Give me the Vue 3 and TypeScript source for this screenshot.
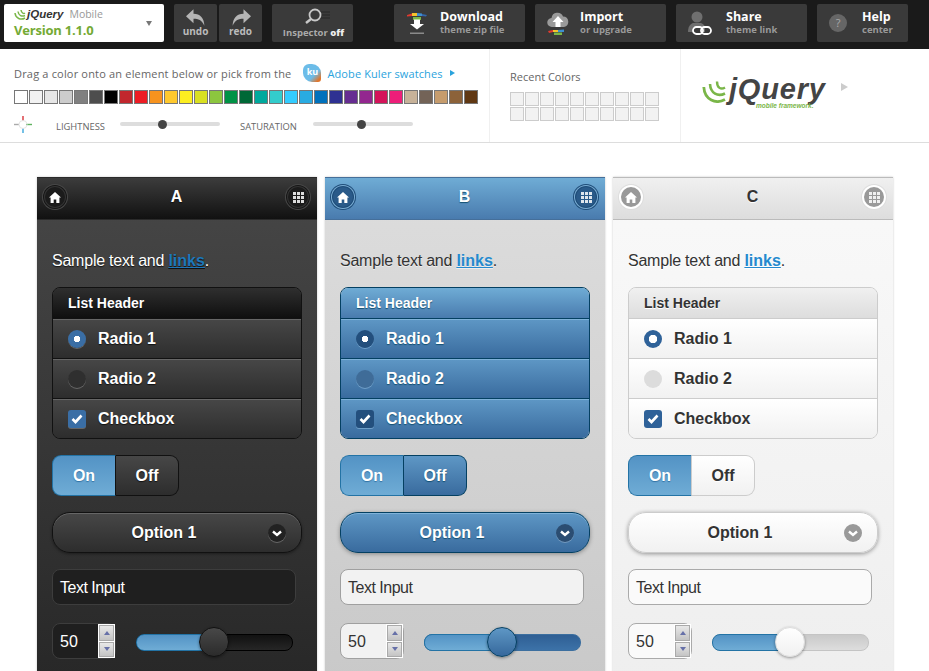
<script setup lang="ts">
interface Tool {
  id: string
  title: string
  sub: string
}
const tools: Tool[] = [
  { id: 'download', title: 'Download', sub: 'theme zip file' },
  { id: 'import', title: 'Import', sub: 'or upgrade' },
  { id: 'share', title: 'Share', sub: 'theme link' },
  { id: 'help', title: 'Help', sub: 'center' },
]
const swatches: string[] = [
  '#ffffff', '#f2f2f2', '#e6e6e6', '#cccccc', '#808080', '#4d4d4d', '#000000', '#c1272d',
  '#ed1c24', '#f7931e', '#ffc92e', '#fcee21', '#d9e021', '#8cc63f', '#009245', '#006837',
  '#00a99d', '#33cccc', '#33ccff', '#29abe2', '#0071bc', '#2e3192', '#662d91', '#93278f',
  '#d4145a', '#ed1e79', '#c7b299', '#736357', '#c69c6d', '#8c6239', '#603813',
]
const recent: number[] = Array.from({ length: 20 }, (_, i) => i)
const panels: { key: string; title: string }[] = [
  { key: 'a', title: 'A' },
  { key: 'b', title: 'B' },
  { key: 'c', title: 'C' },
]
const grid: number[] = [0, 1, 2, 3, 4, 5, 6, 7, 8]
</script>

<template>
  <div class="page">
    <header class="topbar">
      <div class="version">
        <div class="version-text">
          <div class="version-brand">
            <svg class="swirl-small" viewBox="0 0 24 22" width="12" height="11">
              <path d="M22 18C14 23 3 19 2 8M22 13C16 16 9 13 8 5M22 8C19 10 15 8 14 2" fill="none" stroke="#7ab648" stroke-width="3" />
            </svg>
            <span class="brand-jq">jQuery</span>
            <span class="brand-mobile">Mobile</span>
          </div>
          <div class="version-number">Version 1.1.0</div>
        </div>
        <span class="caret"></span>
      </div>

      <div class="history">
        <button class="tool-mini">
          <svg viewBox="0 0 24 20" width="20" height="17"><path d="M9 0L0 8.500 9 17v-5.500c6 0 10 1.500 13 8.500 0-9-5-14.500-13-14.500z" fill="#b5b5b5" /></svg>
          <span>undo</span>
        </button>
        <button class="tool-mini">
          <svg viewBox="0 0 24 20" width="20" height="17"><path transform="matrix(-1 0 0 1 24 0)" d="M9 0L0 8.500 9 17v-5.500c6 0 10 1.500 13 8.500 0-9-5-14.500-13-14.500z" fill="#b5b5b5" /></svg>
          <span>redo</span>
        </button>
      </div>

      <button class="inspector">
        <svg viewBox="0 0 34 16" width="34" height="16">
          <path d="M20 4h11M20 7h11M20 10h11" stroke="#303030" stroke-width="2" />
          <circle cx="16" cy="7" r="5.500" fill="none" stroke="#c8c8c8" stroke-width="1.800" />
          <path d="M12 11L7 15" stroke="#c8c8c8" stroke-width="2.400" />
        </svg>
        <span>Inspector <b>off</b></span>
      </button>

      <div class="tools">
        <button v-for="tool in tools" :key="tool.id" class="tool" :class="'tool-' + tool.id">
          <span class="tool-icon">
            <svg v-if="tool.id === 'download'" viewBox="0 0 22 22" width="22" height="22">
              <path d="M1 3l5-1.500V4L1 4.500z" fill="#e03a2f" /><path d="M6 1h5v3H6z" fill="#f5c22c" /><path d="M11 1l5 .500V4h-5z" fill="#3e8ed0" /><path d="M16 2l5 1-1 1.500-4-.500z" fill="#36a" />
              <path d="M7 5h8v3H7z" fill="#7ab648" />
              <path d="M8 10h6v5h4l-7 6-7-6h4z" fill="#fff" transform="translate(0 -1.500) scale(1 .900)" />
              <path d="M4 20.500h14v1.500H4z" fill="#8a8a8a" />
            </svg>
            <svg v-else-if="tool.id === 'import'" viewBox="0 0 22 24" width="22" height="24">
              <path d="M5 16a4.500 4.500 0 0 1-.500-9A6 6 0 0 1 16 5.500 5.300 5.300 0 0 1 17 16z" fill="#9a9a9a" />
              <path d="M11 5l5.500 6H13.500v5h-5v-5H5.500z" fill="#fff" />
              <path d="M1 20l5-1v2l-4 1z" fill="#e03a2f" /><path d="M6 19h5v2H6z" fill="#f5c22c" /><path d="M11 19l6-.500V21h-6z" fill="#3e8ed0" /><path d="M7 21.500h8V24H7z" fill="#7ab648" />
            </svg>
            <svg v-else-if="tool.id === 'share'" viewBox="0 0 26 24" width="26" height="24">
              <circle cx="9" cy="6" r="5.500" fill="#6f6f6f" />
              <path d="M0 21c0-5 2-8 5-9h8c3 1 4 3 4 6v3z" fill="#6f6f6f" />
              <rect x="5" y="16" width="10" height="7" rx="3.500" fill="#3a3a3a" stroke="#fff" stroke-width="1.800" />
              <rect x="13" y="16" width="10" height="7" rx="3.500" fill="none" stroke="#fff" stroke-width="1.800" />
            </svg>
            <span v-else class="help-dot">?</span>
          </span>
          <span class="tool-text">
            <span class="tool-title">{{ tool.title }}</span>
            <span class="tool-sub">{{ tool.sub }}</span>
          </span>
        </button>
      </div>
    </header>

    <section class="palette">
      <div class="colors">
        <div class="colors-line">
          <span class="drag-text">Drag a color onto an element below or pick from the</span>
          <span class="kuler-icon">ku</span>
          <a class="kuler-link">Adobe Kuler swatches</a>
          <span class="kuler-arrow"></span>
        </div>
        <div class="swatches">
          <span v-for="color in swatches" :key="color" class="swatch" :style="{ background: color }"></span>
        </div>
        <div class="adjust">
          <svg class="target" viewBox="0 0 18 17" width="18" height="17">
            <path d="M9 0v5" stroke="#d8343a" stroke-width="1.400" /><path d="M9 12v5" stroke="#3aa6dc" stroke-width="1.400" />
            <path d="M0 8.500h5" stroke="#aaa" stroke-width="1.400" /><path d="M12 8.500h6" stroke="#5fb25f" stroke-width="1.400" />
            <circle cx="9" cy="8.500" r="4" fill="none" stroke="#e4e4e4" />
          </svg>
          <span class="adjust-label lightness">LIGHTNESS</span>
          <span class="mini-track"><i class="mini-thumb" style="left: 38px"></i></span>
          <span class="adjust-label saturation">SATURATION</span>
          <span class="mini-track"><i class="mini-thumb" style="left: 44px"></i></span>
        </div>
      </div>
      <div class="recent">
        <div class="recent-title">Recent Colors</div>
        <div class="recent-grid">
          <span v-for="n in recent" :key="n" class="recent-cell"></span>
        </div>
      </div>
      <div class="logo-area">
        <svg class="swirl" viewBox="0 0 24 23" width="24" height="23">
          <path d="M23 19.500C14 24.500 2.500 20 1.800 7" fill="none" stroke="#7ab648" stroke-width="2.800" />
          <path d="M23 13.500C16 17 8.500 13.500 8 4" fill="none" stroke="#7ab648" stroke-width="2.600" />
          <path d="M23 7.500C19 10 15 8 15 1.500" fill="none" stroke="#7ab648" stroke-width="2.400" />
        </svg>
        <div class="logo-words">
          <div class="logo-jq">jQuery</div>
          <div class="logo-sub">mobile framework.</div>
        </div>
        <span class="logo-arrow"></span>
      </div>
    </section>

    <main class="panels">
      <article v-for="panel in panels" :key="panel.key" class="panel" :class="'theme-' + panel.key">
        <div class="panel-head">
          <span class="round-btn">
            <svg viewBox="0 0 12 11" width="12" height="11"><path d="M6 0l6 5.500h-1.600V11H7.300V7.500H4.700V11H1.600V5.500H0z" fill="currentColor" /></svg>
          </span>
          <h2>{{ panel.title }}</h2>
          <span class="round-btn">
            <span class="dots"><i v-for="d in grid" :key="d"></i></span>
          </span>
        </div>
        <div class="panel-body">
          <p class="sample">Sample text and <a>links</a>.</p>
          <div class="list">
            <div class="list-head">List Header</div>
            <div class="row">
              <span class="radio on"></span>
              <span>Radio 1</span>
            </div>
            <div class="row">
              <span class="radio"></span>
              <span>Radio 2</span>
            </div>
            <div class="row">
              <span class="check">
                <svg viewBox="0 0 12 10" width="12" height="10"><path d="M1.500 5l3 3 6-6.500" fill="none" stroke="#fff" stroke-width="2.600" /></svg>
              </span>
              <span>Checkbox</span>
            </div>
          </div>
          <div class="toggle">
            <span class="seg seg-on">On</span>
            <span class="seg seg-off">Off</span>
          </div>
          <div class="select">
            <span class="select-text">Option 1</span>
            <span class="chev">
              <svg viewBox="0 0 10 7" width="10" height="7"><path d="M1 1.500l4 3.500 4-3.500" fill="none" stroke="#fff" stroke-width="2.400" /></svg>
            </span>
          </div>
          <div class="text-input">Text Input</div>
          <div class="slider-row">
            <div class="number">
              <span>50</span>
              <span class="stepper">
                <i class="step step-up"></i>
                <i class="step step-down"></i>
              </span>
            </div>
            <div class="slider">
              <span class="slider-fill"></span>
              <span class="slider-thumb"></span>
            </div>
          </div>
        </div>
      </article>
    </main>
  </div>
</template>

<style scoped>
.page {
  width: 929px;
  height: 671px;
  overflow: hidden;
  background: #fff;
  font-family: "Liberation Sans", Arial, sans-serif;
}
button {
  border: 0;
  padding: 0;
  margin: 0;
  font: inherit;
}

/* Top bar */
.topbar {
  display: flex;
  height: 49px;
  box-sizing: border-box;
  padding: 4px 0 7px 4px;
  background: #1a1a1a;
  font-family: "Open Sans", sans-serif;
}
.version {
  width: 160px;
  display: flex;
  align-items: center;
  justify-content: space-between;
  box-sizing: border-box;
  padding: 0 10px;
  background: #fff;
  border-radius: 2px;
}
.version-brand {
  display: flex;
  align-items: center;
  height: 13px;
  font-size: 10.5px;
  line-height: 13px;
}
.swirl-small {
  margin-right: 1px;
}
.brand-jq {
  font: italic bold 11.5px "Liberation Sans", sans-serif;
  color: #333;
  margin-right: 6px;
}
.brand-mobile {
  color: #999;
}
.version-number {
  font-size: 13px;
  font-weight: 700;
  letter-spacing: -.2px;
  line-height: 18px;
  color: #74aa35;
}
.caret {
  width: 0;
  height: 0;
  margin-right: 2px;
  border: 3.5px solid transparent;
  border-top: 5px solid #777;
  border-bottom: 0;
}
.history {
  display: flex;
  gap: 2px;
  margin-left: 10px;
}
.tool-mini {
  width: 43px;
  height: 38px;
  display: flex;
  flex-direction: column;
  align-items: center;
  padding-top: 5px;
  box-sizing: border-box;
  background: #3a3a3a;
  border-radius: 2px;
  color: #bbb;
  font-size: 10px;
  font-weight: 700;
  line-height: 11px;
}
.inspector {
  width: 81px;
  height: 38px;
  margin-left: 10px;
  display: flex;
  flex-direction: column;
  align-items: center;
  padding-top: 4px;
  box-sizing: border-box;
  background: #3a3a3a;
  border-radius: 2px;
  color: #aaa;
  font-size: 9.5px;
  font-weight: 700;
  line-height: 13px;
}
.inspector svg {
  margin-bottom: 2px;
  margin-left: 6px;
}
.inspector span {
  margin-left: 2px;
}
.inspector b {
  color: #eee;
}
.tools {
  display: flex;
  gap: 10px;
  margin-left: 41px;
}
.tool {
  width: 131px;
  height: 38px;
  display: flex;
  align-items: center;
  box-sizing: border-box;
  padding-left: 12px;
  background: #3a3a3a;
  border-radius: 2px;
  text-align: left;
}
.tool-help {
  width: 91px;
}
.tool-icon {
  width: 34px;
  height: 30px;
  display: flex;
  align-items: center;
  flex: none;
}
.tool-import .tool-icon,
.tool-help .tool-icon {
  width: 33px;
}
.tool-share .tool-icon {
  width: 38px;
}
.help-dot {
  width: 18px;
  height: 18px;
  border-radius: 50%;
  background: #666;
  color: #aaa;
  font-size: 11px;
  line-height: 18px;
  text-align: center;
}
.tool-text {
  display: flex;
  flex-direction: column;
  padding-bottom: 2px;
}
.tool-title {
  color: #fff;
  font-size: 12.5px;
  font-weight: 700;
  line-height: 15px;
}
.tool-sub {
  color: #999;
  font-size: 9.5px;
  font-weight: 700;
  line-height: 12px;
}

/* Palette */
.palette {
  display: flex;
  height: 94px;
  box-sizing: border-box;
  border-bottom: 1px solid #ddd;
  font-family: "Open Sans", sans-serif;
  color: #666;
}
.colors {
  width: 490px;
  box-sizing: border-box;
  padding: 13px 0 0 14px;
  border-right: 1px solid #f0f0f0;
}
.colors-line {
  display: flex;
  align-items: center;
  height: 22px;
  font-size: 11px;
}
.drag-text {
  letter-spacing: .18px;
}
.kuler-icon {
  width: 18px;
  height: 18px;
  margin-left: 12px;
  border-radius: 6px 9px 3px 9px;
  background: linear-gradient(135deg, #6cbce8 62%, #e0762c 88%);
  color: #fff;
  font-size: 9px;
  font-weight: 700;
  line-height: 16px;
  text-align: center;
}
.kuler-link {
  margin-left: 6px;
  letter-spacing: .1px;
  color: #2aa3dd;
}
.kuler-arrow {
  margin-left: 7px;
  border-left: 5px solid #2aa3dd;
  border-top: 3px solid transparent;
  border-bottom: 3px solid transparent;
}
.swatches {
  display: flex;
  gap: 1px;
  margin-top: 6px;
}
.swatch {
  width: 14px;
  height: 14px;
  box-sizing: border-box;
  border: 1px solid #777;
}
.adjust {
  display: flex;
  align-items: center;
  margin-top: 10px;
  height: 20px;
}
.target {
  flex: none;
}
.adjust-label {
  margin-top: 4px;
  font-size: 9.4px;
}
.lightness {
  margin-left: 24px;
  width: 64px;
}
.saturation {
  margin-left: 20px;
  width: 73px;
}
.mini-track {
  position: relative;
  width: 100px;
  height: 4px;
  border-radius: 2px;
  background: #ddd;
}
.mini-thumb {
  position: absolute;
  top: -2.5px;
  width: 9px;
  height: 9px;
  border-radius: 50%;
  background: #444;
}
.recent {
  width: 191px;
  box-sizing: border-box;
  padding: 19px 0 0 20px;
  border-right: 1px solid #f0f0f0;
}
.recent-title {
  font-size: 11px;
  line-height: 18px;
}
.recent-grid {
  display: grid;
  grid-template-columns: repeat(10, 14px);
  gap: 1px;
  margin-top: 6px;
}
.recent-cell {
  width: 14px;
  height: 14px;
  box-sizing: border-box;
  border: 1px solid #ccc;
  background: #f2f2f2;
}
.logo-area {
  display: flex;
  align-items: flex-start;
  padding: 31px 0 0 21px;
}
.swirl {
  margin-right: 3px;
}
.logo-words {
  width: 97px;
}
.logo-jq {
  font: italic 700 29px/25px "Liberation Sans", sans-serif;
  letter-spacing: .8px;
  color: #444;
  margin-top: -3px;
}
.logo-sub {
  margin-top: 0;
  margin-left: 27px;
  font: italic 700 6.5px/8px "Liberation Sans", sans-serif;
  color: #7ab648;
  white-space: nowrap;
}
.logo-arrow {
  margin: 3px 0 0 15px;
  border-left: 7px solid #ccc;
  border-top: 4px solid transparent;
  border-bottom: 4px solid transparent;
}

/* Panels */
.panels {
  display: flex;
  gap: 8px;
  padding: 34px 0 0 37px;
}
.panel {
  width: 280px;
  height: 530px;
  flex: none;
  box-sizing: border-box;
  background: linear-gradient(var(--body-top), var(--body-bottom));
  box-shadow: 0 0 2px rgba(0, 0, 0, .22);
  color: var(--text);
  font-size: 16px;
}
.theme-a {
  --body-top: #474747;
  --body-bottom: #262626;
  --text: #fff;
  --shadow: 0 1px 1px #111;
  --ink-shadow: 0 1px 1px #111;
  --head-top: #3c3c3c;
  --head-bottom: #111;
  --head-line: #2a2a2a;
  --head-text: #fff;
  --round-bg: #1b1b1b;
  --round-fg: #fff;
  --round-ring: 0 0 0 1px #333, 0 0 0 2px #161616, 0 0 0 3px #484848;
  --list-head-top: #2f2f2f;
  --list-head-bottom: #0f0f0f;
  --list-line: #111;
  --row-high: #666;
  --row-top: #474747;
  --row-bottom: #2d2d2d;
  --row-text: #fff;
  --radio-off: #2f2f2f;
  --radio-edge: #666;
  --radio-on: #3a6ea5;
  --input-bg: #1f1f1f;
  --input-line: #3d3d3d;
  --input-text: #fff;
  --track-top: #111;
  --track-bottom: #262626;
  --track-line: #000;
  --thumb-top: #484848;
  --thumb-bottom: #2b2b2b;
  --thumb-line: #111;
  --chev: #222;
  --link: #1e78bb;
  --select-shadow: 0 1px 3px rgba(0, 0, 0, .4);
  --off-text: #fff;
}
.theme-b {
  --body-top: #dddddd;
  --body-bottom: #c8c8c8;
  --text: #333;
  --shadow: 0 1px 0 #eee;
  --ink-shadow: 0 1px 1px #145072;
  --head-top: #6facd5;
  --head-bottom: #497bae;
  --head-line: #456f9a;
  --head-text: #fff;
  --round-bg: #2a5a89;
  --round-fg: #fff;
  --round-ring: 0 0 0 1px #1e4c78, 0 0 0 2px #7aadd4, 0 0 0 3px #1e4c78;
  --list-head-top: #6facd5;
  --list-head-bottom: #497bae;
  --list-line: #044062;
  --row-high: #7fb2d9;
  --row-top: #5e97c5;
  --row-bottom: #396b9e;
  --row-text: #fff;
  --radio-off: #3f6c98;
  --radio-edge: #6f9fc8;
  --radio-on: #234f7d;
  --input-bg: #f2f2f2;
  --input-line: #a0a0a0;
  --input-text: #333;
  --track-top: #2f5f94;
  --track-bottom: #3c72a8;
  --track-line: #3c6f9f;
  --thumb-top: #5e97c5;
  --thumb-bottom: #36689c;
  --thumb-line: #044062;
  --chev: #2b4d72;
  --link: #2489ce;
  --select-shadow: 0 1px 4px rgba(0, 0, 0, .35);
  --off-text: #fff;
}
.theme-c {
  --body-top: #f9f9f9;
  --body-bottom: #eeeeee;
  --text: #333;
  --shadow: 0 1px 0 #fff;
  --ink-shadow: 0 1px 0 #fff;
  --head-top: #f0f0f0;
  --head-bottom: #dddddd;
  --head-line: #bbb;
  --head-text: #333;
  --round-bg: #999;
  --round-fg: #fff;
  --round-ring: 0 0 0 2px #fff, 0 0 0 3px #ddd;
  --list-head-top: #f0f0f0;
  --list-head-bottom: #dddddd;
  --list-line: #ccc;
  --row-high: #fff;
  --row-top: #ffffff;
  --row-bottom: #f1f1f1;
  --row-text: #333;
  --radio-off: #dcdcdc;
  --radio-edge: #dcdcdc;
  --radio-on: #2f6299;
  --input-bg: #fafafa;
  --input-line: #aaa;
  --input-text: #333;
  --track-top: #c9c9c9;
  --track-bottom: #ddd;
  --track-line: #c4c4c4;
  --thumb-top: #ffffff;
  --thumb-bottom: #f1f1f1;
  --thumb-line: #ddd;
  --chev: #999;
  --link: #2489ce;
  --select-shadow: 0 1px 4px rgba(0, 0, 0, .4);
  --off-text: #333;
}
.panel-head {
  display: flex;
  align-items: center;
  justify-content: space-between;
  height: 43px;
  box-sizing: border-box;
  padding: 0 6px 3px 5px;
  background: linear-gradient(var(--head-top), var(--head-bottom));
  border-top: 1px solid var(--head-line);
  border-bottom: 1px solid var(--head-line);
}
.panel-head h2 {
  margin: 0;
  color: var(--head-text);
  font-size: 16px;
  font-weight: 700;
  text-shadow: var(--ink-shadow);
}
.round-btn {
  width: 20px;
  height: 20px;
  margin: 0 3px;
  display: flex;
  align-items: center;
  justify-content: center;
  border-radius: 50%;
  background: var(--round-bg);
  color: var(--round-fg);
  box-shadow: var(--round-ring);
}
.dots {
  display: grid;
  grid-template-columns: repeat(3, 3px);
  gap: 1px;
  opacity: .85;
}
.dots i {
  width: 3px;
  height: 3px;
  background: var(--round-fg);
}
.panel-body {
  padding: 0 15px;
}
.sample {
  margin: 30px 0 15px;
  height: 22px;
  line-height: 22px;
  letter-spacing: -.23px;
  text-shadow: var(--shadow);
}
.sample a {
  color: var(--link);
  font-weight: 700;
  letter-spacing: 0;
  text-decoration: underline;
}
.list {
  width: 250px;
  box-sizing: border-box;
  border: 1px solid var(--list-line);
  border-radius: 8px;
  overflow: hidden;
}
.list-head {
  height: 30px;
  padding-left: 15px;
  background: linear-gradient(var(--list-head-top), var(--list-head-bottom));
  color: var(--head-text);
  font-size: 14px;
  font-weight: 700;
  line-height: 30px;
  text-shadow: var(--ink-shadow);
}
.row {
  display: flex;
  align-items: center;
  gap: 12px;
  height: 40px;
  box-sizing: border-box;
  padding-left: 15px;
  border-top: 1px solid var(--list-line);
  background: linear-gradient(var(--row-top), var(--row-bottom));
  box-shadow: inset 0 1px 0 var(--row-high);
  color: var(--row-text);
  font-weight: 700;
  text-shadow: var(--ink-shadow);
}
.radio {
  width: 18px;
  height: 18px;
  flex: none;
  box-sizing: border-box;
  border-radius: 50%;
  background: var(--radio-off);
  box-shadow: 0 1px 0 var(--radio-edge);
}
.radio.on {
  background: radial-gradient(circle, #fff 0 3px, var(--radio-on) 3.5px);
}
.theme-c .radio.on {
  background: radial-gradient(circle, #fff 0 4px, var(--radio-on) 4.5px);
}
.theme-c .radio {
  box-shadow: none;
}
.check {
  width: 18px;
  height: 18px;
  flex: none;
  display: flex;
  align-items: center;
  justify-content: center;
  border-radius: 3px;
  background: var(--radio-on);
  box-shadow: 0 1px 0 var(--radio-edge);
}
.theme-a .check {
  background: #3a6ea5;
}
.theme-c .check {
  box-shadow: none;
}
.toggle {
  display: flex;
  width: 127px;
  height: 41px;
  margin-top: 16px;
  box-sizing: border-box;
  font-weight: 700;
  text-align: center;
  line-height: 39px;
}
.seg {
  box-sizing: border-box;
  height: 41px;
  border: 1px solid var(--list-line);
}
.seg-on {
  width: 64px;
  border-color: #2373a5;
  border-right-color: var(--list-line);
  border-radius: 9px 0 0 9px;
  background: linear-gradient(#5393c5, #6facd5);
  color: #fff;
  text-shadow: 0 1px 1px #3373a5;
}
.seg-off {
  width: 63px;
  border-left: 0;
  border-radius: 0 9px 9px 0;
  background: linear-gradient(var(--row-top), var(--row-bottom));
  color: var(--off-text);
  text-shadow: var(--ink-shadow);
}
.select {
  position: relative;
  width: 250px;
  height: 41px;
  margin-top: 16px;
  box-sizing: border-box;
  padding-right: 26px;
  border: 1px solid var(--list-line);
  border-radius: 18px;
  background: linear-gradient(var(--row-top), var(--row-bottom));
  box-shadow: inset 0 1px 0 var(--row-high), var(--select-shadow);
  color: var(--row-text);
  font-weight: 700;
  line-height: 39px;
  text-align: center;
  text-shadow: var(--ink-shadow);
}
.chev {
  position: absolute;
  right: 15px;
  top: 11px;
  width: 18px;
  height: 18px;
  display: flex;
  align-items: center;
  justify-content: center;
  border-radius: 50%;
  background: var(--chev);
  box-shadow: 0 1px 0 rgba(255, 255, 255, .25);
}
.text-input {
  width: 244px;
  height: 36px;
  margin-top: 16px;
  box-sizing: border-box;
  padding-left: 7px;
  border: 1px solid var(--input-line);
  border-radius: 8px;
  background: var(--input-bg);
  color: var(--input-text);
  line-height: 36px;
  letter-spacing: -.5px;
}
.slider-row {
  display: flex;
  align-items: flex-start;
  margin-top: 18px;
}
.number {
  position: relative;
  width: 64px;
  height: 36px;
  box-sizing: border-box;
  padding-left: 7px;
  border: 1px solid var(--input-line);
  border-radius: 8px;
  background: var(--input-bg);
  color: var(--input-text);
  line-height: 36px;
}
.stepper {
  position: absolute;
  top: 0;
  right: 0;
  width: 17px;
  height: 34px;
  display: flex;
  flex-direction: column;
  box-sizing: border-box;
  gap: 1px;
  border: 1px solid #fff;
  background: #fff;
}
.step {
  flex: 1;
  display: flex;
  align-items: center;
  justify-content: center;
  background: linear-gradient(#e8e8e8, #c4c4c4);
  border: 1px solid #aaa;
}
.step::after {
  content: "";
  border-left: 3px solid transparent;
  border-right: 3px solid transparent;
}
.step-up::after {
  border-bottom: 4px solid #6670a8;
}
.step-down::after {
  border-top: 4px solid #6670a8;
}
.slider {
  position: relative;
  width: 157px;
  height: 17px;
  margin: 11px 0 0 20px;
  box-sizing: border-box;
  border: 1px solid var(--track-line);
  border-radius: 8px;
  background: linear-gradient(var(--track-top), var(--track-bottom));
}
.slider-fill {
  position: absolute;
  left: -1px;
  top: -1px;
  bottom: -1px;
  width: 78px;
  border: 1px solid #2373a5;
  box-sizing: border-box;
  border-radius: 8px 0 0 8px;
  background: linear-gradient(#5393c5, #6facd5);
}
.slider-thumb {
  position: absolute;
  left: 62px;
  top: -8px;
  width: 30px;
  height: 30px;
  box-sizing: border-box;
  border: 1px solid var(--thumb-line);
  border-radius: 50%;
  background: linear-gradient(var(--thumb-top), var(--thumb-bottom));
  box-shadow: 0 1px 3px rgba(0, 0, 0, .4);
}
</style>

<style>
html, body {
  margin: 0;
  background: #fff;
}
</style>
